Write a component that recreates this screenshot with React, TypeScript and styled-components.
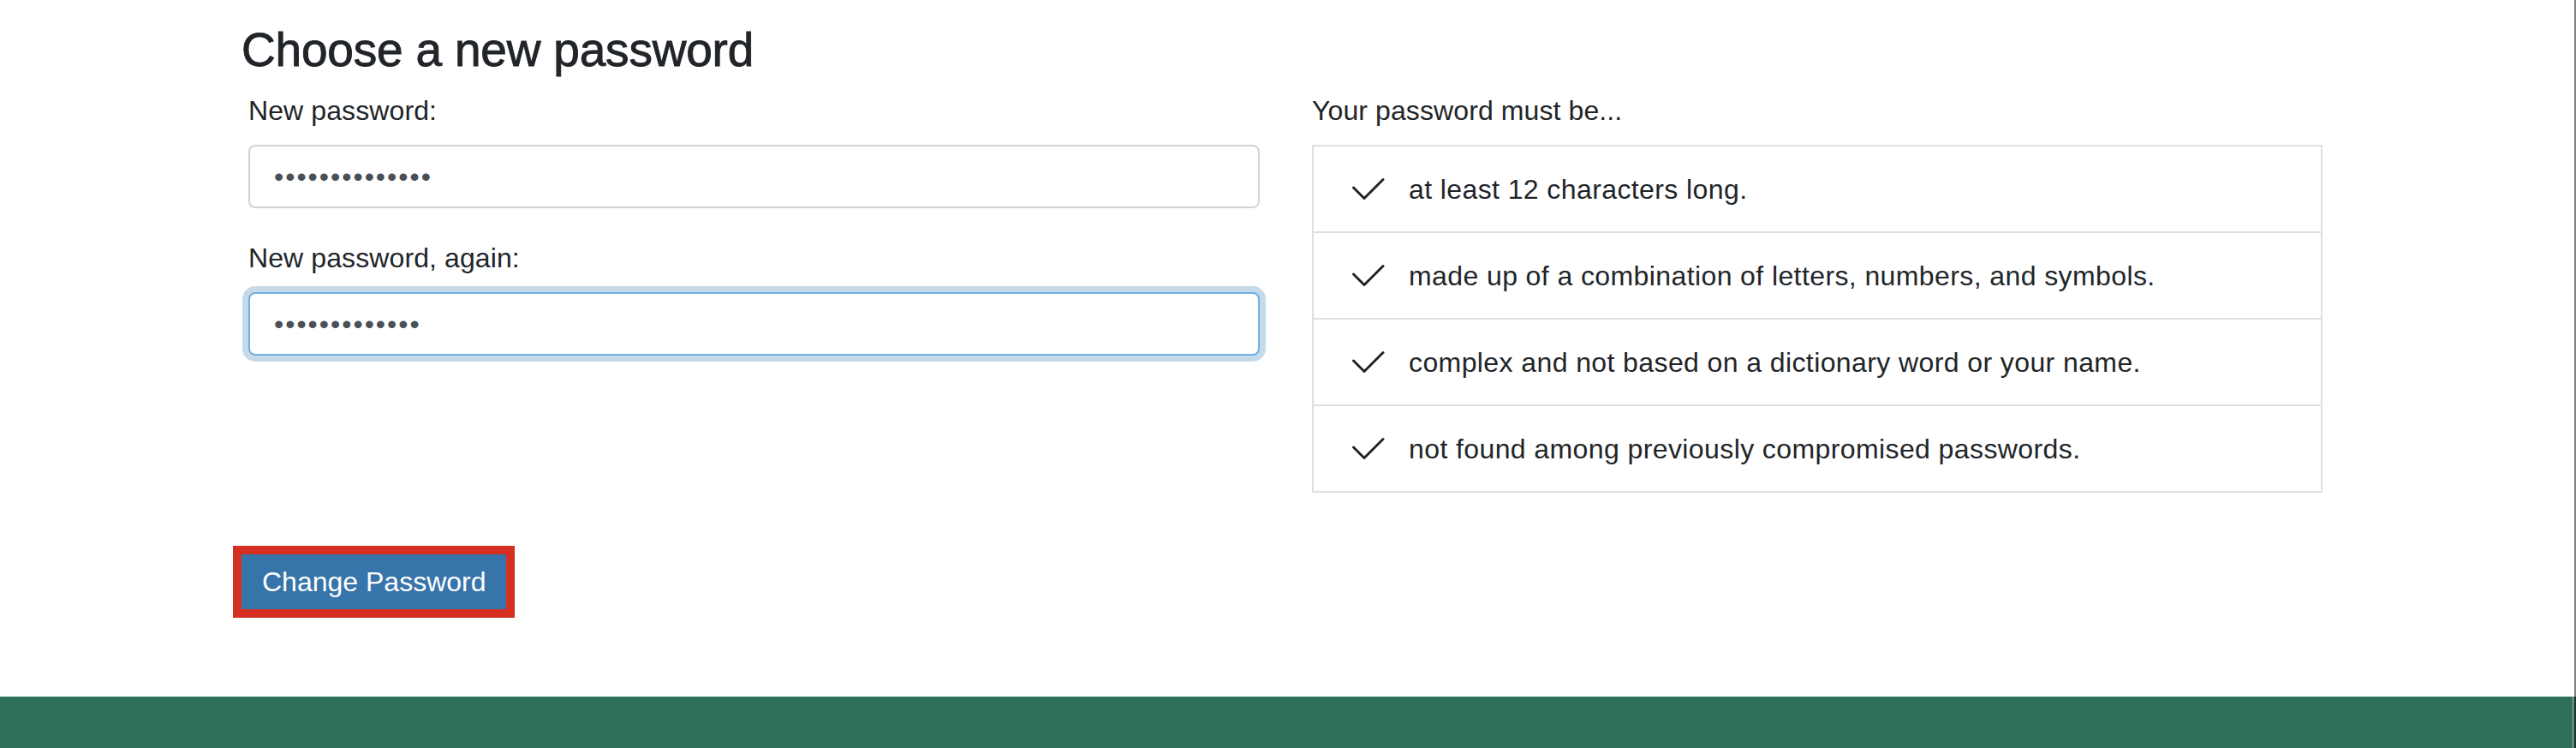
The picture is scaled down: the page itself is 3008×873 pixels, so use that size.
import React from "react"
import styled, { createGlobalStyle } from "styled-components"

const GlobalStyle = createGlobalStyle`
  *, *::before, *::after {
    box-sizing: border-box;
  }
  html, body {
    margin: 0;
    padding: 0;
    background: #ffffff;
  }
  body {
    font-family: "Liberation Sans", Arial, Helvetica, sans-serif;
    color: #212529;
  }
`

const Page = styled.div`
  display: flex;
  flex-direction: column;
  width: 100%;
  height: 873px;
  overflow: hidden;
`

const Main = styled.main`
  flex: 1;
  padding: 25px 0 0 282px;
  border-right: 2px solid #808080;
`

const Heading = styled.h3`
  margin: 0 0 14px;
  font-size: 55px;
  font-weight: 500;
  line-height: 66px;
  letter-spacing: -0.2px;
  -webkit-text-stroke: 0.9px #212529;
  color: #212529;
`

const Columns = styled.div`
  display: grid;
  grid-template-columns: 1181px 1180px;
  column-gap: 61px;
  padding-left: 8px;
  align-items: start;
`

const Column = styled.div`
  display: flex;
  flex-direction: column;
`

const FormGroup = styled.div`
  display: flex;
  flex-direction: column;
  & + & {
    margin-top: 34px;
  }
`

const Label = styled.label`
  display: block;
  margin-bottom: 16px;
  font-size: 32px;
  line-height: 48px;
  letter-spacing: 0.1px;
  color: #212529;
`

const PasswordInput = styled.input<{ $focused?: boolean }>`
  display: block;
  width: 100%;
  height: 74px;
  padding: 0 24px 0 28px;
  font-family: "Liberation Sans", Arial, sans-serif;
  font-size: 32px;
  letter-spacing: 2px;
  color: #495057;
  background: #ffffff;
  border: 2px solid ${(p) => (p.$focused ? "#6db1e8" : "#ced4da")};
  border-radius: 8px;
  outline: none;
  box-shadow: ${(p) => (p.$focused ? "0 0 0 7px #c6d9e8" : "none")};
`

const RuleList = styled.ul`
  list-style: none;
  margin: 0;
  padding: 0;
  border: 2px solid #dfdfdf;
`

const RuleItem = styled.li`
  display: flex;
  align-items: center;
  padding: 25.5px 40px 25.5px 44px;
  font-size: 32px;
  line-height: 48px;
  letter-spacing: 0.4px;
  color: #212529;
  & + & {
    border-top: 2px solid #dfdfdf;
  }
`

const Check = styled.svg`
  flex: none;
  width: 39px;
  height: 27px;
  margin-right: 28px;
`

const SubmitButton = styled.button`
  display: block;
  margin-top: 72px;
  height: 64px;
  padding: 0 24px;
  font-family: "Liberation Sans", Arial, sans-serif;
  font-size: 32px;
  line-height: 40px;
  color: #ffffff;
  background: #3774aa;
  border: none;
  border-radius: 0;
  outline: 10px solid #d52f22;
  cursor: pointer;
`

const Footer = styled.footer`
  flex: none;
  height: 60px;
  background: #2f7058;
  box-shadow: inset -2px 0 0 #1d362b, inset -5px 0 0 #5c8c7a;
`

const CheckIcon = () => (
  <Check viewBox="0 0 39 27" aria-hidden="true">
    <path
      d="M2.5 12 L15 24.5 L37 2.5"
      fill="none"
      stroke="#212529"
      strokeWidth="3"
      strokeLinecap="round"
      strokeLinejoin="round"
    />
  </Check>
)

const rules = [
  "at least 12 characters long.",
  "made up of a combination of letters, numbers, and symbols.",
  "complex and not based on a dictionary word or your name.",
  "not found among previously compromised passwords.",
]

export default function App() {
  return (
    <>
      <GlobalStyle />
      <Page>
        <Main>
          <Heading>Choose a new password</Heading>
          <Columns>
            <Column>
              <FormGroup>
                <Label htmlFor="pw1">New password:</Label>
                <PasswordInput id="pw1" type="password" defaultValue="abcdefghijklmn" readOnly />
              </FormGroup>
              <FormGroup>
                <Label htmlFor="pw2">New password, again:</Label>
                <PasswordInput id="pw2" type="password" defaultValue="abcdefghijklm" readOnly $focused />
              </FormGroup>
            </Column>
            <Column>
              <Label as="div">Your password must be...</Label>
              <RuleList>
                {rules.map((r) => (
                  <RuleItem key={r}>
                    <CheckIcon />
                    {r}
                  </RuleItem>
                ))}
              </RuleList>
            </Column>
          </Columns>
          <SubmitButton type="button">Change Password</SubmitButton>
        </Main>
        <Footer />
      </Page>
    </>
  )
}
